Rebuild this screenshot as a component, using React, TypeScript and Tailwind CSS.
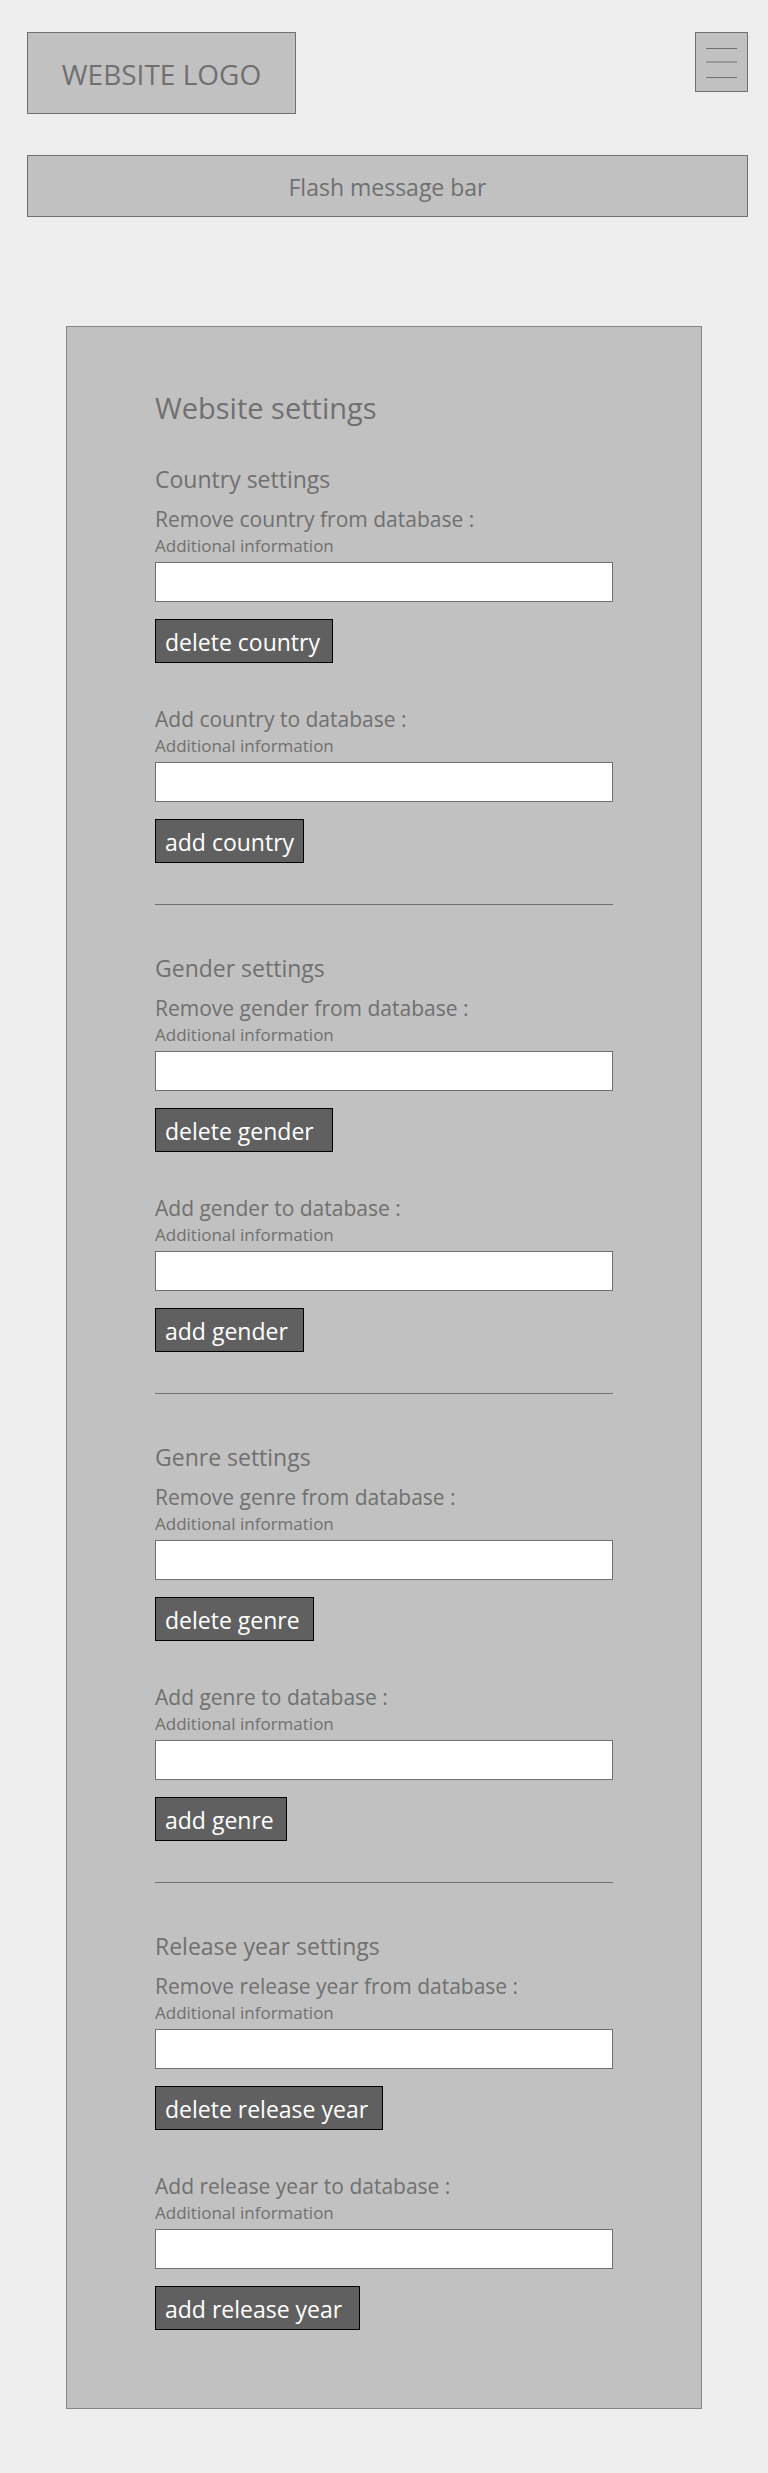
type Field = {
  id: string;
  label: string;
  action: string;
  buttonWidth: string;
};

type Section = {
  title: string;
  fields: Field[];
};

const sections: Section[] = [
  {
    title: "Country settings",
    fields: [
      { id: "remove-country", label: "Remove country from database :", action: "delete country", buttonWidth: "w-[178px]" },
      { id: "add-country", label: "Add country to database :", action: "add country", buttonWidth: "w-[149px]" },
    ],
  },
  {
    title: "Gender settings",
    fields: [
      { id: "remove-gender", label: "Remove gender from database :", action: "delete gender", buttonWidth: "w-[178px]" },
      { id: "add-gender", label: "Add gender to database :", action: "add gender", buttonWidth: "w-[149px]" },
    ],
  },
  {
    title: "Genre settings",
    fields: [
      { id: "remove-genre", label: "Remove genre from database :", action: "delete genre", buttonWidth: "w-[159px]" },
      { id: "add-genre", label: "Add genre to database :", action: "add genre", buttonWidth: "w-[132px]" },
    ],
  },
  {
    title: "Release year settings",
    fields: [
      { id: "remove-release-year", label: "Remove release year from database :", action: "delete release year", buttonWidth: "w-[228px]" },
      { id: "add-release-year", label: "Add release year to database :", action: "add release year", buttonWidth: "w-[205px]" },
    ],
  },
];

function FieldForm({ id, label, action, buttonWidth }: Field) {
  return (
    <form className="flex flex-col items-start" onSubmit={(e) => e.preventDefault()}>
      <label htmlFor={id} className="text-[21px] leading-7">
        {label}
      </label>
      <p id={`${id}-hint`} className="mt-[3px] text-[17px] leading-5">
        Additional information
      </p>
      <input
        id={id}
        type="text"
        aria-describedby={`${id}-hint`}
        className="mt-1.5 h-10 w-full border border-[#707070] bg-white px-2 text-lg"
      />
      <button
        type="submit"
        className={`mt-[17px] h-11 whitespace-nowrap border border-black bg-[#606060] pt-0.5 pl-[9px] text-left text-[23px] leading-10 text-white ${buttonWidth}`}
      >
        {action}
      </button>
    </form>
  );
}

export default function App() {
  return (
    <div className="min-h-screen bg-[#eeeeee] pt-8 pb-16 font-['Open_Sans',sans-serif] text-[#707070]">
      <header className="flex items-start justify-between pr-5 pl-[27px]">
        <a
          href="#"
          className="flex h-[82px] w-[269px] items-center justify-center border border-[#707070] bg-[#c1c1c1] pt-0.5 text-[28px] leading-10"
        >
          WEBSITE LOGO
        </a>
        <button
          type="button"
          aria-label="Menu"
          className="flex h-[60px] w-[53px] items-center justify-center border border-[#707070] bg-[#c1c1c1]"
        >
          <svg width="31" height="32" viewBox="0 0 31 32" shapeRendering="crispEdges" aria-hidden="true">
            <rect x="0" y="2" width="31" height="1" fill="#707070" />
            <rect x="0" y="15" width="31" height="2" fill="#999999" />
            <rect x="0" y="31" width="31" height="1" fill="#707070" />
          </svg>
        </button>
      </header>

      <div
        role="status"
        className="mt-[41px] mr-5 ml-[27px] flex h-[62px] items-center justify-center border border-[#707070] bg-[#c1c1c1] pt-0.5 text-[23px] leading-8"
      >
        Flash message bar
      </div>

      <main className="mx-[66px] mt-[109px] border border-[#858585] bg-[#c1c1c1] px-[88px] pt-[61px] pb-[78px]">
        <h1 className="mb-[35px] text-[29px] leading-10">Website settings</h1>
        <div className="flex flex-col">
          {sections.map((section, index) => (
            <section key={section.title}>
              {index > 0 && <hr className="mt-[41px] mb-[47px] border-t border-[#707070]" />}
              <h2 className="mb-2.5 text-[23px] leading-8">{section.title}</h2>
              <div className="flex flex-col gap-[42px]">
                {section.fields.map((field) => (
                  <FieldForm key={field.id} {...field} />
                ))}
              </div>
            </section>
          ))}
        </div>
      </main>
    </div>
  );
}
